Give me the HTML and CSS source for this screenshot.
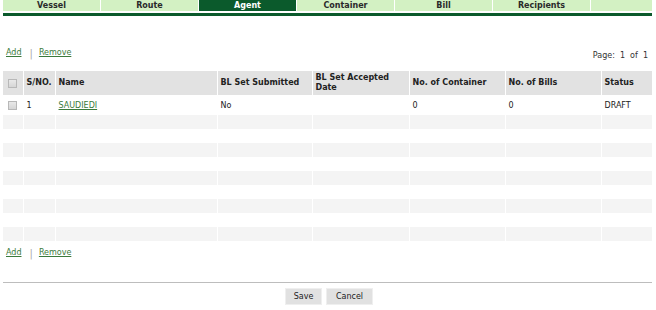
FILE: index.html
```html
<!DOCTYPE html>
<html lang="en">
<head>
    <meta charset="UTF-8">
    <meta name="viewport" content="width=device-width, initial-scale=1.0">
    <title>Agent</title>
    <link rel="stylesheet" href="styles.css">
</head>
<body>
    <div class="page">
        <ul class="tabs">
            <li>Vessel</li>
            <li>Route</li>
            <li class="active">Agent</li>
            <li>Container</li>
            <li>Bill</li>
            <li>Recipients</li>
            <li class="blank"></li>
        </ul>

        <div class="actions top">
            <div class="links">
                <a href="#">Add</a>
                <span class="sep">|</span>
                <a href="#">Remove</a>
            </div>
            <div class="pager">Page:&nbsp; 1&nbsp; of&nbsp; 1</div>
        </div>

        <table class="grid">
            <colgroup>
                <col style="width:20px">
                <col style="width:32px">
                <col style="width:162px">
                <col style="width:95px">
                <col style="width:97px">
                <col style="width:96px">
                <col style="width:96px">
                <col style="width:51px">
            </colgroup>
            <thead>
                <tr>
                    <th class="cb"><span class="box"></span></th>
                    <th>S/NO.</th>
                    <th>Name</th>
                    <th>BL Set Submitted</th>
                    <th>BL Set Accepted Date</th>
                    <th>No. of Container</th>
                    <th>No. of Bills</th>
                    <th>Status</th>
                </tr>
            </thead>
            <tbody>
                <tr class="data">
                    <td class="cb"><span class="box"></span></td>
                    <td>1</td>
                    <td><a href="#">SAUDIEDI</a></td>
                    <td>No</td>
                    <td></td>
                    <td>0</td>
                    <td>0</td>
                    <td>DRAFT</td>
                </tr>
                <tr class="empty"><td></td><td></td><td></td><td></td><td></td><td></td><td></td><td></td></tr>
                <tr class="empty"><td></td><td></td><td></td><td></td><td></td><td></td><td></td><td></td></tr>
                <tr class="empty"><td></td><td></td><td></td><td></td><td></td><td></td><td></td><td></td></tr>
                <tr class="empty"><td></td><td></td><td></td><td></td><td></td><td></td><td></td><td></td></tr>
                <tr class="empty"><td></td><td></td><td></td><td></td><td></td><td></td><td></td><td></td></tr>
                <tr class="empty"><td></td><td></td><td></td><td></td><td></td><td></td><td></td><td></td></tr>
                <tr class="empty"><td></td><td></td><td></td><td></td><td></td><td></td><td></td><td></td></tr>
                <tr class="empty"><td></td><td></td><td></td><td></td><td></td><td></td><td></td><td></td></tr>
                <tr class="empty"><td></td><td></td><td></td><td></td><td></td><td></td><td></td><td></td></tr>
            </tbody>
        </table>

        <div class="actions bottom">
            <div class="links">
                <a href="#">Add</a>
                <span class="sep">|</span>
                <a href="#">Remove</a>
            </div>
        </div>

        <div class="footer">
            <button class="btn save">Save</button>
            <button class="btn cancel">Cancel</button>
        </div>
    </div>
</body>
</html>
```

FILE: styles.css
```css
body {
    margin: 0;
    background: #fff;
    font-family: "DejaVu Sans", Verdana, sans-serif;
    font-size: 8px;
    color: #222;
}
.page {
    padding: 0 4px 0 3px;
}

/* tab strip */
.tabs {
    list-style: none;
    margin: 0;
    padding: 0 0 2px 0;
    display: flex;
    gap: 1px;
    border-bottom: 3px solid #0b5a2c;
}
.tabs li {
    width: 97px;
    height: 11px;
    line-height: 12px;
    text-align: center;
    font-weight: bold;
    color: #2a2a2a;
    background: #d3f1c3;
}
.tabs li.active {
    background: #0b5a2c;
    color: #fff;
}
.tabs li.blank {
    flex: 1;
}

/* add / remove */
.actions {
    display: flex;
    justify-content: space-between;
    align-items: flex-start;
}
.actions.top {
    margin-top: 30px;
    height: 25px;
}
.actions.bottom {
    margin-top: 5px;
    height: 12px;
}
.links {
    display: flex;
    align-items: center;
    height: 12px;
    padding-left: 3px;
}
.links a {
    color: #3b7a3b;
}
.links .sep {
    color: #aaa;
    margin: 0 6px 0 8px;
    font-size: 10px;
    position: relative;
    top: 1px;
}
.pager {
    padding-top: 5px;
    padding-right: 4px;
    color: #333;
}
a {
    color: #3b7a3b;
    text-decoration: underline;
}

/* grid */
.grid {
    width: 649px;
    table-layout: fixed;
    border-collapse: collapse;
}
.grid th,
.grid td {
    border-left: 1px solid #fff;
    padding: 0 0 0 3px;
    text-align: left;
    vertical-align: middle;
}
.grid th:first-child,
.grid td:first-child {
    border-left: none;
}
.grid thead th {
    height: 24px;
    background: #e2e2e2;
    font-weight: bold;
    line-height: 10px;
    color: #222;
}
.grid tr.data td {
    height: 19px;
    padding-top: 1px;
    background: #fff;
}
.grid tr.empty td {
    height: 14px;
    background: #fff;
}
.grid tr.empty:nth-child(even) td {
    background: #f4f4f4;
}
.grid .cb {
    padding-left: 5px;
}
.box {
    display: block;
    width: 7px;
    height: 7px;
    border: 1px solid #b8b8b8;
    background: linear-gradient(#e9e9e9, #d6d6d6);
}

/* bottom buttons */
.footer {
    margin-top: 24px;
    border-top: 1px solid #bdbdbd;
    padding-top: 5px;
    display: flex;
    justify-content: center;
    gap: 4px;
    padding-left: 3px;
}
.btn {
    height: 17px;
    padding: 0;
    border: 1px solid #efefef;
    background: #e1e1e1;
    font-family: "DejaVu Sans", Verdana, sans-serif;
    font-size: 8px;
    color: #222;
}
.btn.save {
    width: 37px;
}
.btn.cancel {
    width: 47px;
}
```
